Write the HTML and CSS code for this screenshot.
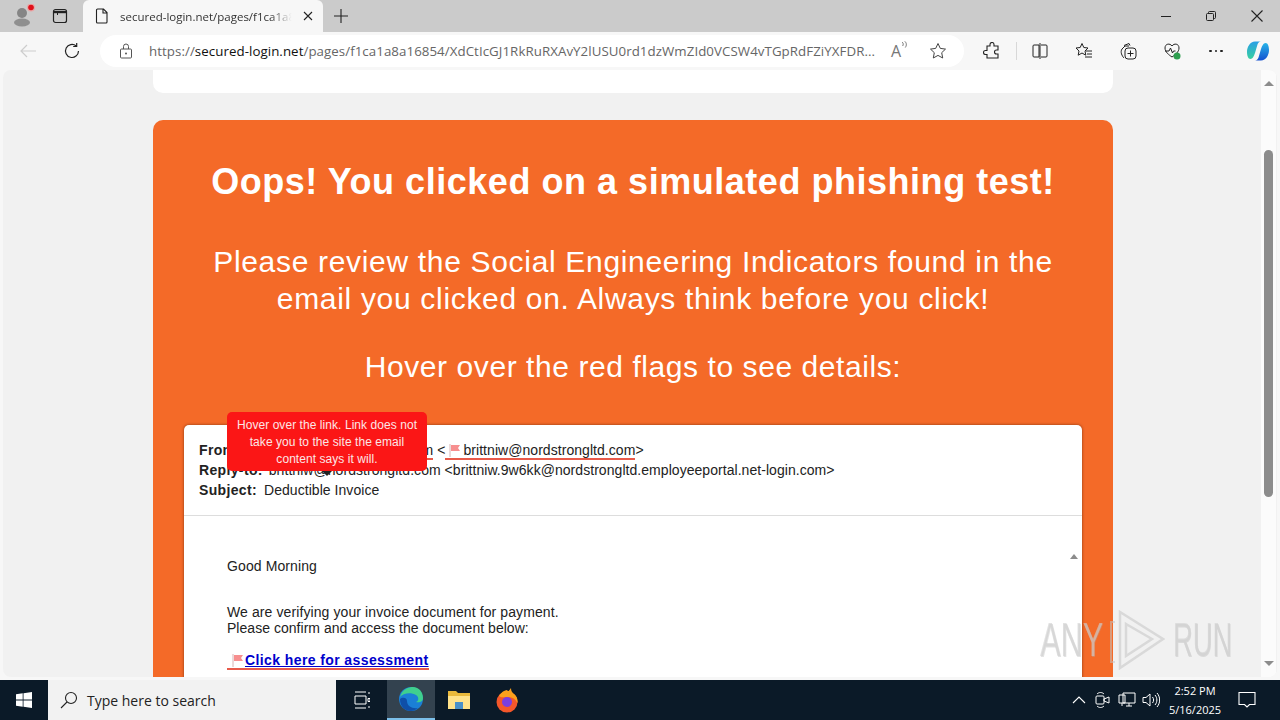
FILE: index.html
```html
<!DOCTYPE html>
<html lang="en">
<head>
<meta charset="utf-8">
<title>secured-login.net</title>
<link rel="stylesheet" href="styles.css">
</head>
<body>
<div class="tabstrip">
  <div class="strip-left">
    <svg width="24" height="24" viewBox="0 0 24 24"><circle cx="10" cy="9" r="5" fill="#858585"/><ellipse cx="10" cy="18.500" rx="8" ry="4" fill="#8f8f8f"/><circle cx="19" cy="3.500" r="4" fill="#e9a5a5"/><circle cx="19" cy="3.500" r="2.800" fill="#e0101a"/></svg>
    <svg width="16" height="16" viewBox="0 0 16 16"><rect x="1.500" y="1.500" width="13" height="13" rx="2" fill="none" stroke="#222" stroke-width="1.200"/><path d="M1.500 4h13" stroke="#222" stroke-width="2.400" fill="none"/><path d="M5.500 5v2" stroke="#222"/></svg>
  </div>
  <div class="tab">
    <svg width="14" height="16" viewBox="0 0 14 16"><path d="M2.500 1h6l3.500 3.500v9.500a1 1 0 0 1-1 1h-8.500a1 1 0 0 1-1-1v-12a1 1 0 0 1 1-1zM8 1v4h4" fill="none" stroke="#222" stroke-width="1.100"/></svg>
    <span class="tab-title">secured-login.net/pages/f1ca1a8</span>
    <svg width="10" height="10" viewBox="0 0 10 10"><path d="M1 1l8 8M9 1l-8 8" stroke="#222" stroke-width="1.100"/></svg>
  </div>
  <svg class="plus" width="14" height="14" viewBox="0 0 14 14"><path d="M7 0v14M0 7h14" stroke="#222" stroke-width="1.100"/></svg>
  <div class="window-btns">
    <svg width="10" height="10" viewBox="0 0 10 10"><path d="M0 5.500h10" stroke="#222"/></svg>
    <svg width="10" height="10" viewBox="0 0 10 10"><rect x=".5" y="2.500" width="7" height="7" rx="1" fill="none" stroke="#222"/><path d="M2.500 2.500v-1a1 1 0 0 1 1-1h5a1 1 0 0 1 1 1v5a1 1 0 0 1-1 1h-1" fill="none" stroke="#222"/></svg>
    <svg width="12" height="12" viewBox="0 0 12 12"><path d="M.5.500l11 11M11.500.500l-11 11" stroke="#222" stroke-width="1.100"/></svg>
  </div>
</div>
<div class="toolbar">
  <svg class="back" width="16" height="14" viewBox="0 0 16 14"><path d="M1 7h15M7 1L1 7l6 6" fill="none" stroke="#cdcdcd" stroke-width="1.200"/></svg>
  <svg class="reload" width="18" height="18" viewBox="0 0 18 18"><path d="M15.500 9a6.500 6.500 0 1 1-2.300-5M13.700 1v3.500h-3.500" fill="none" stroke="#222" stroke-width="1.200"/></svg>
  <div class="address">
    <svg width="14" height="16" viewBox="0 0 14 16"><rect x="1.500" y="6" width="11" height="9" rx="1" fill="none" stroke="#555"/><path d="M4.500 6V3.500a2.500 2.500 0 0 1 5 0V6" fill="none" stroke="#555"/><circle cx="7" cy="10.500" r="1" fill="#555"/></svg>
    <span class="url"><span class="dim">https://</span>secured-login.net<span class="dim">/pages/f1ca1a8a16854/XdCtIcGJ1RkRuRXAvY2lUSU0rd1dzWmZId0VCSW4vTGpRdFZiYXFDR...</span></span>
    <span class="read">A<svg class="read-waves" width="6" height="8" viewBox="0 0 6 8"><path d="M1 1c1.500 1 1.500 2.500 .7 4M3.500 0c2.300 1.800 2.300 4.500 .8 6.500" fill="none" stroke="#777"/></svg></span>
    <svg width="18" height="18" viewBox="0 0 18 18"><path d="M9 1.500l2.300 4.900 5.200.7-3.800 3.600 1 5.300L9 13.400 4.300 16l1-5.300L1.500 7.100l5.200-.7z" fill="none" stroke="#444" stroke-width="1"/></svg>
  </div>
  <div class="tools">
    <svg width="18" height="18" viewBox="0 0 18 18"><path d="M7 2.500a2 2 0 0 1 4 0V4h4v4h-1.500a2 2 0 0 0 0 4H15v4H4v-3.500H2.500a2 2 0 0 1 0-4H4V4h3z" fill="none" stroke="#222" stroke-width="1.100"/></svg>
    <span class="sep"></span>
    <svg width="18" height="18" viewBox="0 0 18 18"><path d="M8 3H3a1 1 0 0 0-1 1v10a1 1 0 0 0 1 1h5zM10 3h5a1 1 0 0 1 1 1v10a1 1 0 0 1-1 1h-5M9 1v16" fill="none" stroke="#222" stroke-width="1"/></svg>
    <svg width="18" height="18" viewBox="0 0 18 18"><path d="M7 1.500l1.800 4 4.200.5-3 3 .8 4.200L7 11l-3.800 2.200L4 9 1 6l4.200-.5zM11 9h6M12 12h5M10 15h7" fill="none" stroke="#222" stroke-width="1"/></svg>
    <svg width="18" height="18" viewBox="0 0 18 18"><path d="M5 3.500l5-2 1 2M3 7l3-3h4M3 7c-2 3 0 7 2 9" fill="none" stroke="#222" stroke-width="1"/><rect x="6" y="6" width="11" height="11" rx="3" fill="none" stroke="#222" stroke-width="1"/><path d="M11.500 8.500v6M8.500 11.500h6" stroke="#222" stroke-width="1"/></svg>
    <svg width="18" height="18" viewBox="0 0 18 18"><path d="M9 4C7 1 2 1.500 2 6c0 4 4 7 7 9 3-2 7-5 7-9 0-4.500-5-5-7-2zM2 9h4l1.500-3 2 5 1-2h2" fill="none" stroke="#222" stroke-width="1"/><circle cx="14" cy="14" r="3.500" fill="#2e9e4f"/></svg>
    <span class="dots"><i></i><i></i><i></i></span>
    <svg class="copilot" width="22" height="22" viewBox="0 0 22 22"><defs><linearGradient id="cpa" x1="0" y1="0" x2="0" y2="1"><stop offset="0" stop-color="#2a9fe6"/><stop offset="1" stop-color="#38d0a0"/></linearGradient><linearGradient id="cpb" x1="0" y1="0" x2="0" y2="1"><stop offset="0" stop-color="#27b5e8"/><stop offset="1" stop-color="#1450d0"/></linearGradient></defs><path d="M14 20.500H8c2 0 3-1.500 3.500-3L14 9c1-3 2.500-6 4.500-6C21 3 22 6.500 22 10c0 5-3 10.500-8 10.500z" fill="url(#cpb)"/><path d="M8 1.500h6c-2 0-3 1.500-3.500 3L8 13c-1 3-2.500 6-4.500 6C1 19 0 15.500 0 12 0 7 3 1.500 8 1.500z" fill="url(#cpa)"/></svg>
  </div>
</div>
<main class="page">
  <div class="content">
    <div class="top-card"></div>
    <section class="orange">
      <h1>Oops! You clicked on a simulated phishing test!</h1>
      <p class="lead">Please review the Social Engineering Indicators found in the email you clicked on. Always think before you click!</p>
      <p class="lead hover">Hover over the red flags to see details:</p>
      <div class="email">
        <div class="tooltip">Hover over the link. Link does not take you to the site the email content says it will.</div>
        <div class="email-head">
          <div><b>From:</b> <span class="flagged from-name"><svg class="flag" width="13" height="13" viewBox="0 0 13 13"><path d="M2 0v13" stroke="#d8b4b4"/><path d="M3 1h9l-2 3 2 3H3z" fill="#f78f8f"/></svg>brittniw@nordstrongltd.com</span> &lt;<span class="flagged"><svg class="flag" width="13" height="13" viewBox="0 0 13 13"><path d="M2 0v13" stroke="#d8b4b4"/><path d="M3 1h9l-2 3 2 3H3z" fill="#f78f8f"/></svg>brittniw@nordstrongltd.com</span>&gt;</div>
          <div><b>Reply-to:</b> <span class="reply">brittniw@nordstrongltd.com &lt;brittniw.9w6kk@nordstrongltd.employeeportal.net-login.com&gt;</span></div>
          <div><b>Subject:</b> <span class="subject">Deductible Invoice</span></div>
        </div>
        <div class="email-body">
          <span class="scroll-up"></span>
          <p class="greet">Good Morning</p>
          <p class="msg">We are verifying your invoice document for payment.<br><span class="confirm">Please confirm and access the document below:</span></p>
          <p class="cta"><span class="flagged"><svg class="flag" width="13" height="13" viewBox="0 0 13 13"><path d="M2 0v13" stroke="#d8b4b4"/><path d="M3 1h9l-2 3 2 3H3z" fill="#f78f8f"/></svg><a href="#">Click here for assessment</a></span></p>
        </div>
      </div>
    </section>
  </div>
  <div class="scrollbar">
    <span class="arrow-up"></span>
    <span class="thumb"></span>
    <span class="arrow-down"></span>
  </div>
  <div class="watermark"><span class="wm-text">ANY</span><svg width="55" height="60" viewBox="0 0 55 60"><path d="M5 12H1v40h4" fill="none" stroke="#c4c4c4" stroke-opacity=".55" stroke-width="2"/><path d="M10 2l43 27-43 29zM16 14l26 15-26 17z" fill="none" stroke="#c4c4c4" stroke-opacity=".55" stroke-width="2.500"/></svg><span class="wm-text wm-run">RUN</span></div>
</main>
<footer class="taskbar">
  <svg class="start" width="16" height="16" viewBox="0 0 16 16"><path d="M0 2.300l6.700-1v6.300H0zM7.500 1.200L16 0v7.600H7.500zM0 8.400h6.700v6.300l-6.700-1zM7.500 8.400H16V16l-8.500-1.200z" fill="#fff"/></svg>
  <div class="search">
    <svg width="18" height="18" viewBox="0 0 18 18"><circle cx="11" cy="7" r="5.500" fill="none" stroke="#222" stroke-width="1.100"/><path d="M7 11l-6 6" stroke="#222" stroke-width="1.100"/></svg>
    <span>Type here to search</span>
  </div>
  <div class="task-ico task-view"><svg width="16" height="18" viewBox="0 0 16 18"><path d="M1 1h11M1 17h11M1 5h11v8H1zM15 1v2M14 7.500h2v3h-2zM15 15v2" fill="none" stroke="#fff"/></svg></div>
  <div class="task-ico active"><svg width="26" height="26" viewBox="0 0 26 26"><circle cx="13" cy="13" r="12" fill="#1b7fd6"/><path d="M2 11C4 3 11 1 15 1c6 0 10 5 10 11 0 4-4 5-7 4 3-1 3-5 0-7-5-3-13-2-16 2z" fill="#3fcf8e"/><path d="M9 15c0 5 5 8 11 7-2 2-5 3-7 3-6 0-11-4-11-12 2-2 7-2 7 2z" fill="#0f4fa8"/></svg></div>
  <div class="task-ico"><svg width="24" height="22" viewBox="0 0 24 22"><path d="M1 2h8l2 2h12v16H1z" fill="#e9b93c"/><path d="M1 7h22v13H1z" fill="#ffe28a"/><rect x="8" y="13" width="8" height="7" fill="#4a90c8"/></svg></div>
  <div class="task-ico"><svg width="24" height="26" viewBox="0 0 24 26"><circle cx="12" cy="15" r="10.500" fill="#f4572a"/><path d="M4 9c2-4 6-6 8-6 1 2 2 1 4-2 0 3 1 4 3 6 3 2 4 6 3.500 9-2-4-5-6-9-6-3 0-8 1-9.500-1z" fill="#fba01c"/><circle cx="12" cy="15" r="5" fill="#7a3fe0"/></svg></div>
  <div class="tray">
    <span class="tray-ico"><svg width="14" height="8" viewBox="0 0 14 8"><path d="M1 7l6-6 6 6" fill="none" stroke="#fff" stroke-width="1.100"/></svg></span>
    <span class="tray-ico"><svg width="16" height="18" viewBox="0 0 16 18"><rect x="1" y="5" width="8" height="8" rx="1" fill="none" stroke="#fff"/><path d="M9 8l5-2v6l-5-2zM2 3c2-2 5-2 7 0M2 15c2 2 5 2 7 0" fill="none" stroke="#fff"/></svg></span>
    <span class="tray-ico"><svg width="18" height="16" viewBox="0 0 18 16"><path d="M5 1h12v10H5zM1 3h6v8H1zM4 11v3M8 14h6M11 11v3" fill="none" stroke="#fff"/></svg></span>
    <span class="tray-ico"><svg width="18" height="16" viewBox="0 0 18 16"><path d="M1 5.500h3L8 2v12l-4-3.500H1zM10.500 5c1.500 2 1.500 4 0 6M13 3c2.500 3 2.500 7 0 10M15 1c3.500 4 3.500 10 0 14" fill="none" stroke="#fff"/></svg></span>
    <div class="clock"><span>2:52 PM</span><span>5/16/2025</span></div>
    <svg class="notif" width="18" height="18" viewBox="0 0 18 18"><path d="M1 1.500h16v12h-5.500L9 16l-2.500-2.500H1z" fill="none" stroke="#fff" stroke-width="1.100"/></svg>
  </div>
</footer>
</body>
</html>
```
FILE: styles.css
```css
* { box-sizing: border-box; }
html, body { margin: 0; height: 100%; }
body { width: 1280px; height: 720px; overflow: hidden; display: flex; flex-direction: column; font-family: "Liberation Sans", Arial, sans-serif; background: #f7f7f7; }
svg { display: block; flex: none; }

.tabstrip { height: 32px; background: #cbcbcb; display: flex; align-items: center; flex: none; }
.strip-left { width: 83px; display: flex; align-items: center; padding-left: 12px; gap: 16px; height: 100%; }
.tab { width: 240px; height: 32px; background: #f7f7f7; border-radius: 6px 6px 0 0; display: flex; align-items: center; padding: 0 11px 0 12px; gap: 11px; }
.tab-title { font: 11.500px "Open Sans", sans-serif; color: #333; white-space: nowrap; width: 177px; margin-right: -5px; flex: none; -webkit-mask-image: linear-gradient(90deg, #000 85%, transparent 97%); mask-image: linear-gradient(90deg, #000 85%, transparent 97%); }
.plus { margin-left: 11px; }
.window-btns { margin-left: auto; display: flex; align-items: center; gap: 35px; padding-right: 17px; }

.toolbar { height: 38px; background: #f7f7f7; display: flex; align-items: center; flex: none; }
.back { margin-left: 20px; }
.reload { margin-left: 27px; }
.address { margin-left: 19px; width: 864px; height: 32px; background: #fff; border-radius: 16px; display: flex; align-items: center; padding: 0 16px 0 19px; }
.url { font: 13.300px "Open Sans", sans-serif; letter-spacing: .06px; color: #111; margin-left: 16px; white-space: nowrap; width: 728px; flex: none; }
.dim { color: #666; }
.read { font: 16px "Open Sans", sans-serif; color: #777; display: flex; width: 38px; margin-left: 14px; flex: none; }
.read-waves { margin-top: 1px; }
.tools { display: flex; align-items: center; margin-left: 19px; gap: 26px; }
.sep { width: 1px; height: 18px; background: #d8d8d8; margin: 0 -11.500px; }
.dots { display: flex; gap: 3px; width: 18px; justify-content: center; }
.dots i { width: 2.500px; height: 2.500px; border-radius: 50%; background: #222; }
.copilot { margin-left: -4px; }

.page { flex: 1; min-height: 0; position: relative; overflow: hidden; background: #f1f1f1; border-radius: 8px; margin: 0 3px 3px; padding-left: 150px; }
.content { width: 960px; }
.top-card { height: 23px; background: #fff; border-radius: 0 0 10px 10px; }
.orange { margin-top: 27px; background: #f46a28; border-radius: 10px 10px 0 0; padding: 39px 31px 0; height: 600px; color: #fff; text-align: center; }
h1 { margin: 0; font-size: 36px; line-height: 46px; font-weight: 700; letter-spacing: .53px; }
.lead { margin: 38px 0 0; font-size: 30px; line-height: 37px; letter-spacing: .68px; }
.hover { margin-top: 31px; letter-spacing: .57px; }
.email { position: relative; margin-top: 40px; background: #fff; border-radius: 5px 5px 0 0; color: #222; text-align: left; height: 300px; box-shadow: 0 0 3px rgba(60,20,0,.6); }
.email-head { padding: 15px 15px 15px; height: 91px; border-bottom: 1px solid #ddd; font-size: 14px; line-height: 20px; letter-spacing: .05px; white-space: nowrap; }
.email-head b { letter-spacing: .35px; }
.flagged { border-bottom: 2px solid #e85a4a; display: inline-block; line-height: 16px; }
.flag { display: inline-block; vertical-align: -2px; margin: 0 2px 0 3px; }
.from-name { margin-left: -1px; }
.reply { margin-left: 2px; }
.subject { margin-left: 3px; }
.email-body { position: relative; padding: 0 43px; font-size: 14px; letter-spacing: .1px; }
.greet { margin: 0; padding-top: 41px; line-height: 18px; }
.msg { margin: 29px 0 0; line-height: 16px; }
.confirm { letter-spacing: .03px; }
.cta { margin: 16px 0 0; font-weight: 700; line-height: 16px; }
.cta .flag { margin: 0 1px 0 4px; }
.cta a { color: #0000cc; letter-spacing: .4px; }
.scroll-up { position: absolute; right: 4px; top: 38px; border: 4.500px solid transparent; border-top: 0; border-bottom: 5px solid #8c8c8c; }
.tooltip { position: absolute; left: 43px; top: -13px; width: 200px; height: 59px; padding: 5px 6px; background: #fb1616; color: #fbe6e6; border-radius: 5px; font-size: 12px; line-height: 17px; text-align: center; letter-spacing: .06px; z-index: 2; }
.tooltip::after { content: ""; position: absolute; left: 95px; bottom: -5px; border: 5px solid transparent; border-bottom: 0; border-top: 5px solid #222; }

.scrollbar { position: absolute; right: 1px; top: 0; bottom: 0; width: 15px; background: #fbfbfb; display: flex; flex-direction: column; align-items: center; }
.arrow-up { margin-top: 11px; border: 5px solid transparent; border-top: 0; border-bottom: 5px solid #8c8c8c; }
.thumb { margin-top: 64px; width: 9px; height: 347px; background: #8c8c8c; border-radius: 5px; }
.arrow-down { margin-top: auto; margin-bottom: 11px; border: 5px solid transparent; border-bottom: 0; border-top: 5px solid #8c8c8c; }
.watermark { position: absolute; left: 1037px; top: 540px; height: 60px; display: flex; align-items: center; gap: 7px; font-size: 48px; line-height: 60px; color: rgba(208,208,208,.62); text-shadow: 1px 1px rgba(175,175,175,.35); white-space: nowrap; }
.wm-text { display: block; width: 63px; transform: scaleX(.64); transform-origin: left; }
.wm-run { width: 59px; margin-left: 1px; transform: scaleX(.57); }

.taskbar { height: 40px; background: #0b1a28; display: flex; align-items: center; flex: none; color: #fff; }
.start { margin-left: 16px; }
.search { margin-left: 16px; width: 288px; height: 40px; background: #f2f2f2; color: #222; display: flex; align-items: center; padding-left: 12px; gap: 9px; font: 14px "Open Sans", sans-serif; }
.task-ico { width: 48px; height: 40px; display: flex; align-items: center; justify-content: center; }
.task-view { width: 51px; }
.active { background: #33424f; border-bottom: 2px solid #7cc0ea; }
.tray { margin-left: auto; display: flex; align-items: center; padding-right: 24px; }
.tray-ico { width: 24px; display: flex; justify-content: center; }
.clock { width: 52px; margin-left: 6px; display: flex; flex-direction: column; align-items: center; font: 11px/19px "Open Sans", sans-serif; }
.notif { margin-left: 17px; }
```
